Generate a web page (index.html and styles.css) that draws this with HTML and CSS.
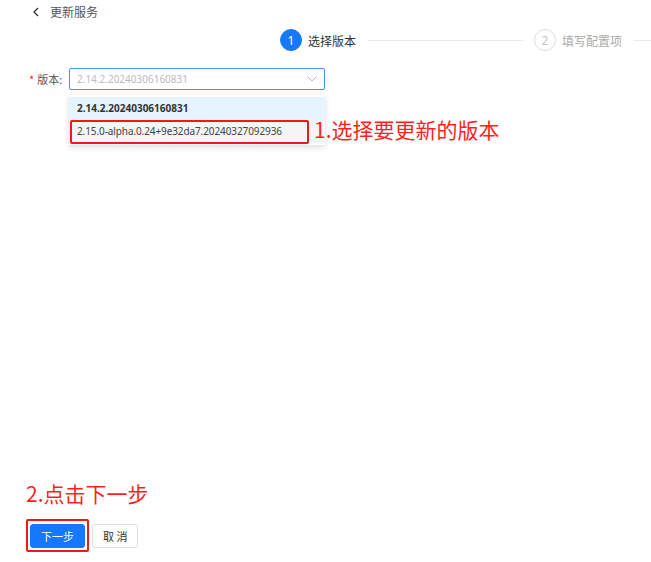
FILE: index.html
```html
<!DOCTYPE html>
<html lang="zh-CN">
<head>
  <meta charset="UTF-8" />
  <title>更新服务</title>
  <link rel="stylesheet" href="styles.css">
</head>
<body>
  <div class="page">

    <!-- Header -->
    <div class="header">
      <span class="back">
        <svg width="10" height="10" viewBox="0 0 10 10"><path d="M7 1 L3 5 L7 9" fill="none" stroke="#333" stroke-width="1.3"/></svg>
      </span>
      <span class="title">更新服务</span>
    </div>

    <!-- Steps -->
    <div class="steps">
      <div class="step active">
        <span class="step-num">1</span>
        <span class="step-label">选择版本</span>
      </div>
      <div class="step-line"></div>
      <div class="step">
        <span class="step-num">2</span>
        <span class="step-label">填写配置项</span>
      </div>
      <div class="step-line tail"></div>
    </div>

    <!-- Form -->
    <div class="form">
      <div class="form-row">
        <label class="form-label"><span class="req">*</span>版本:</label>
        <div class="select-wrap">
          <div class="select">
            <span class="placeholder">2.14.2.20240306160831</span>
            <svg class="arrow" width="10" height="6" viewBox="0 0 10 6"><path d="M0.5 0.5 L5 5 L9.5 0.5" fill="none" stroke="#bbb" stroke-width="1"/></svg>
          </div>
          <div class="dropdown">
            <div class="option selected">2.14.2.20240306160831</div>
            <div class="option hover">2.15.0-alpha.0.24+9e32da7.20240327092936</div>
            <div class="mark-box"></div>
            <div class="note note-1">1.选择要更新的版本</div>
          </div>
        </div>
      </div>
    </div>

    <!-- Footer -->
    <div class="footer">
      <div class="note">2.点击下一步</div>
      <div class="actions">
        <div class="mark-wrap">
          <button class="btn primary">下一步</button>
        </div>
        <button class="btn">取 消</button>
      </div>
    </div>

  </div>
</body>
</html>
```

FILE: styles.css
```css
* {
  box-sizing: border-box;
}

html, body {
  margin: 0;
  height: 100%;
  overflow: hidden;
}

body {
  font-family: "Noto Sans CJK SC", "Noto Sans", sans-serif;
  font-size: 12px;
  color: #333;
  background: #fff;
}

.page {
  display: flex;
  flex-direction: column;
  height: 562px;
}

.header {
  display: flex;
  align-items: center;
  height: 23px;
  padding-left: 31px;
}

.back {
  display: flex;
  width: 19px;
}

.title {
  color: #555;
  font-size: 12px;
}

.steps {
  display: flex;
  align-items: center;
  margin-top: 6px;
  padding-left: 280px;
  height: 22px;
  white-space: nowrap;
}

.step {
  display: flex;
  align-items: center;
  flex-shrink: 0;
}

.step-num {
  width: 22px;
  height: 22px;
  border-radius: 50%;
  border: 1px solid #ddd;
  color: #c4c4c4;
  display: flex;
  align-items: center;
  justify-content: center;
  font-size: 12px;
  font-family: "Noto Sans", sans-serif;
}

.step-label {
  margin-left: 6px;
  font-size: 12px;
  color: #aaa;
}

.step.active .step-num {
  background: #1677ff;
  border-color: #1677ff;
  color: #fff;
}

.step.active .step-label {
  color: #333;
}

.step-line {
  flex-shrink: 0;
  width: 155px;
  height: 1px;
  background: #eaeaea;
  margin: 0 11px 0 12px;
}

.step-line.tail {
  width: 40px;
  margin-right: 0;
}

.form {
  flex: 1;
  padding-top: 17px;
}

.form-row {
  display: flex;
  align-items: center;
}

.form-label {
  width: 69px;
  padding-left: 29px;
  color: #555;
  font-size: 11px;
}

.req {
  color: #f5222d;
  margin-right: 3px;
}

.select-wrap {
  position: relative;
  width: 256px;
}

.select {
  height: 22px;
  border: 1px solid #4096ff;
  border-radius: 2px;
  display: flex;
  align-items: center;
  justify-content: space-between;
  padding: 0 7px 0 7px;
}

.placeholder {
  color: #bbb;
  font-family: "Noto Sans", sans-serif;
  font-size: 10px;
}

.dropdown {
  position: absolute;
  left: 0;
  top: 27px;
  width: 256px;
  background: #fff;
  padding: 2px 0 2px 0;
  box-shadow: 0 2px 6px rgba(0, 0, 0, 0.15);
}

.option {
  height: 23px;
  line-height: 23px;
  padding-left: 8px;
  font-family: "Noto Sans", sans-serif;
  font-size: 10px;
  color: #333;
  white-space: nowrap;
}

.option.selected {
  background: #e6f4ff;
  font-weight: bold;
}

.option.hover {
  background: #f5f5f5;
  color: #444;
  letter-spacing: -0.1px;
}

.mark-box {
  position: absolute;
  left: 1px;
  top: 25px;
  width: 239px;
  height: 24px;
  border: 2px solid #f01919;
  border-radius: 2px;
}

.note {
  color: #ff1f1f;
  font-size: 21px;
  white-space: nowrap;
  font-family: "Noto Sans CJK SC", sans-serif;
}

.note-1 {
  position: absolute;
  left: 245px;
  top: 19px;
  line-height: 30px;
}

.footer {
  padding-left: 26px;
  padding-bottom: 10px;
}

.footer .note {
  line-height: 30px;
  margin-bottom: 11px;
}

.actions {
  display: flex;
  align-items: center;
}

.mark-wrap {
  border: 2px solid #f01919;
  border-radius: 2px;
  padding: 3px 2px 2px 2px;
  margin-right: 3px;
}

.btn {
  display: block;
  height: 24px;
  padding: 0 10px;
  border: 1px solid #ddd;
  border-radius: 3px;
  background: #fff;
  color: #333;
  font-family: "Noto Sans CJK SC", sans-serif;
  font-size: 11px;
  white-space: nowrap;
}

.btn.primary {
  width: 55px;
  padding: 0;
  background: #1677ff;
  border-color: #1677ff;
  color: #fff;
}
```
